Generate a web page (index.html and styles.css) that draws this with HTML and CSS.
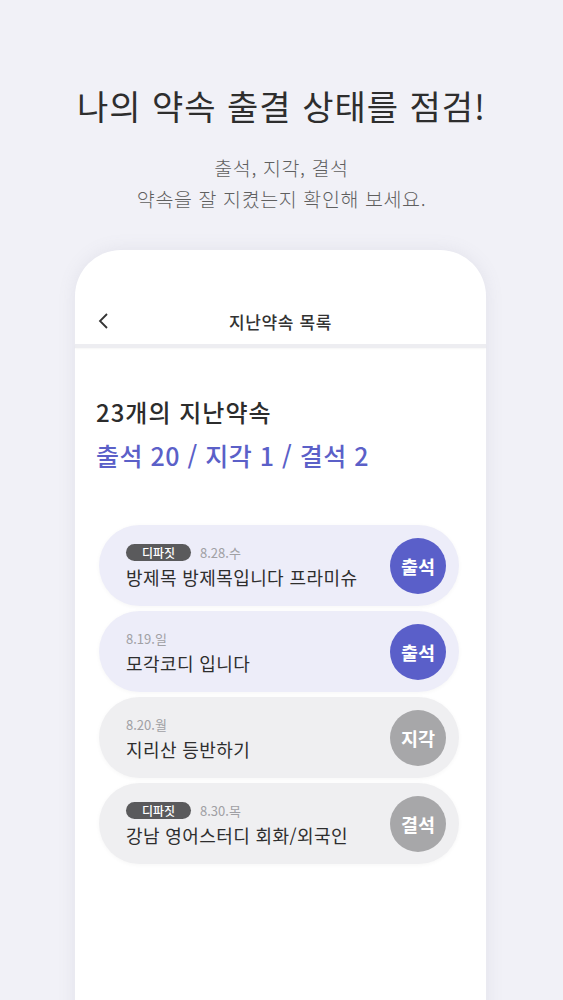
FILE: index.html
```html
<!DOCTYPE html>
<html lang="ko">
<head>
<meta charset="utf-8">
<link rel="stylesheet" href="styles.css">
</head>
<body>
<div class="page">
  <h1 class="headline">나의 약속 출결 상태를 점검!</h1>
  <p class="sub">출석, 지각, 결석<br>약속을 잘 지켰는지 확인해 보세요.</p>
  <div class="phone">
    <div class="status"></div>
    <div class="appbar">
      <svg class="back" width="12" height="18" viewBox="0 0 12 18"><path d="M10 2 L3 9 L10 16" fill="none" stroke="#333" stroke-width="1.8"/></svg>
      <span class="appbar-title">지난약속 목록</span>
    </div>
    <div class="divider"></div>
    <div class="summary">
      <div class="count">23개의 지난약속</div>
      <div class="stats">출석 20 / 지각 1 / 결석 2</div>
    </div>
    <ul class="list">
      <li class="item item-ok">
        <div class="info">
          <div class="meta"><span class="badge">디파짓</span><span class="date">8.28.수</span></div>
          <div class="name">방제목 방제목입니다 프라미슈</div>
        </div>
        <span class="state state-ok">출석</span>
      </li>
      <li class="item item-ok">
        <div class="info">
          <div class="meta"><span class="date">8.19.일</span></div>
          <div class="name">모각코디 입니다</div>
        </div>
        <span class="state state-ok">출석</span>
      </li>
      <li class="item item-off">
        <div class="info">
          <div class="meta"><span class="date">8.20.월</span></div>
          <div class="name">지리산 등반하기</div>
        </div>
        <span class="state state-off">지각</span>
      </li>
      <li class="item item-off">
        <div class="info">
          <div class="meta"><span class="badge">디파짓</span><span class="date">8.30.목</span></div>
          <div class="name">강남 영어스터디 회화/외국인</div>
        </div>
        <span class="state state-off">결석</span>
      </li>
    </ul>
  </div>
</div>
</body>
</html>
```
FILE: styles.css
```css
* { box-sizing: border-box; }
html, body {
  margin: 0;
  padding: 0;
  background: #f1f1f7;
  height: 1000px;
  overflow: hidden;
}
body {
  font-family: "Noto Sans CJK KR", "Noto Sans", sans-serif;
  color: #333;
}
.page {
  display: flex;
  flex-direction: column;
  align-items: center;
}
.headline {
  margin: 82px 0 0;
  font-size: 34px;
  font-weight: 400;
  line-height: 48px;
  color: #2e2e2e;
  letter-spacing: 1px;
}
.sub {
  margin: 22px 0 0;
  font-size: 19.5px;
  font-weight: 300;
  line-height: 31px;
  color: #5f5f5f;
  text-align: center;
  letter-spacing: 0.6px;
}
.phone {
  margin: 36px 0 0 -2px;
  width: 411px;
  height: 800px;
  background: #fff;
  border-radius: 46px 46px 0 0;
  box-shadow: 0 0 18px rgba(120, 120, 150, 0.12);
}
.status { height: 48px; }
.appbar {
  position: relative;
  height: 46px;
  display: flex;
  align-items: center;
  justify-content: center;
}
.back {
  position: absolute;
  left: 22px;
  top: 14px;
}
.appbar-title {
  font-size: 17px;
  font-weight: 500;
  color: #333;
  letter-spacing: 0.6px;
}
.divider {
  height: 4px;
  background: #ededf1;
  box-shadow: 0 1px 2px rgba(0, 0, 0, 0.04);
}
.summary {
  padding: 47px 0 0 21px;
}
.count {
  font-size: 24px;
  font-weight: 500;
  line-height: 34px;
  color: #2c2c2c;
  letter-spacing: 1px;
}
.stats {
  margin-top: 8px;
  font-size: 25px;
  font-weight: 500;
  line-height: 36px;
  color: #5b60c8;
  letter-spacing: 0.5px;
}
.list {
  list-style: none;
  margin: 52px 27px 0 24px;
  padding: 0;
  display: flex;
  flex-direction: column;
  gap: 5px;
}
.item {
  height: 81px;
  border-radius: 41px;
  display: flex;
  align-items: center;
  padding: 0 13px 0 27px;
  box-shadow: 0 1px 4px rgba(0, 0, 0, 0.04);
}
.item-ok { background: #ededf9; }
.item-off { background: #efeff1; }
.info {
  flex: 1;
  display: flex;
  flex-direction: column;
  padding-top: 2px;
}
.meta {
  display: flex;
  align-items: center;
  gap: 9px;
  height: 19px;
}
.badge {
  display: inline-flex;
  align-items: center;
  justify-content: center;
  width: 65px;
  height: 17px;
  border-radius: 9px;
  background: #5a5a5c;
  color: #fff;
  font-size: 12px;
  font-weight: 500;
}
.date {
  font-size: 13px;
  color: #a0a0a4;
}
.name {
  margin-top: 3px;
  font-size: 18px;
  line-height: 25px;
  color: #2e2e2e;
  letter-spacing: 0.4px;
}
.state {
  width: 56px;
  height: 56px;
  border-radius: 50%;
  display: flex;
  align-items: center;
  justify-content: center;
  color: #fff;
  font-size: 18.5px;
  font-weight: 700;
}
.state-ok { background: #5a5fc9; }
.state-off { background: #a7a7a9; }
```
